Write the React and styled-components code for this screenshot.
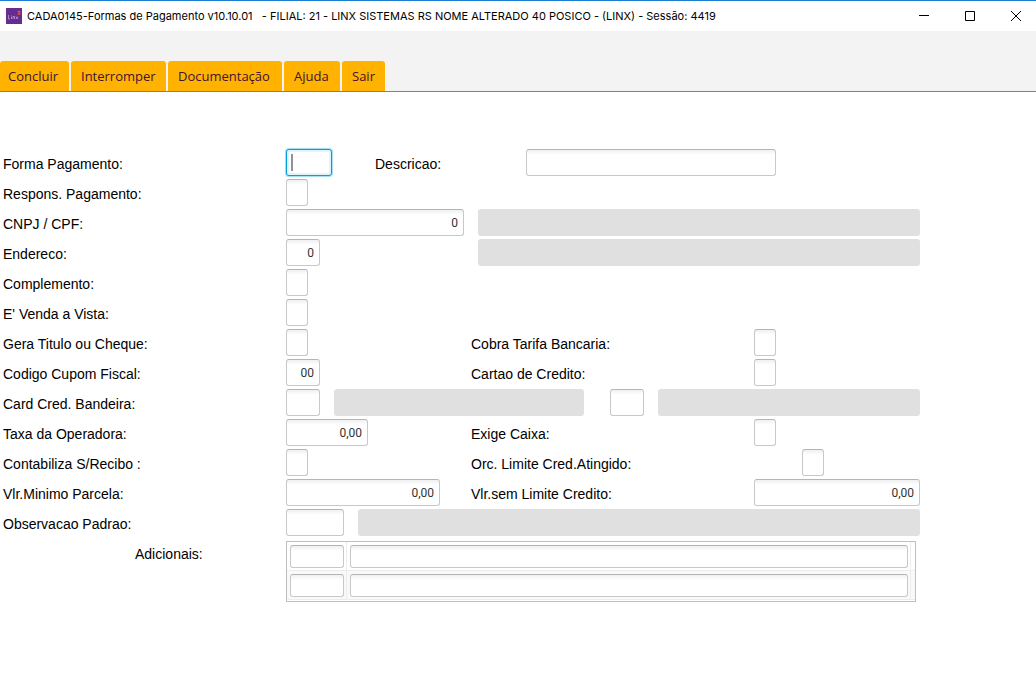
import React from "react";
import styled, { createGlobalStyle, css } from "styled-components";

const GlobalStyle = createGlobalStyle`
  *, *::before, *::after { box-sizing: border-box; }
  html, body { margin: 0; background: #fff; }
  body { font-family: "Liberation Sans", Arial, sans-serif; font-size: 14px; color: #000; }
  button, input { font: inherit; margin: 0; }
`;

const Window = styled.div`
  min-height: 100vh;
  border-top: 1px solid #1a7fd4;
`;

const TitleBar = styled.header`
  display: flex;
  align-items: center;
  height: 30px;
  padding-left: 6px;
  gap: 5px;
`;

const Title = styled.h1`
  flex: 1;
  min-width: 0;
  margin: 0;
  overflow: hidden;
  white-space: pre;
  font: 400 11px/20px "Segoe UI", Inter, sans-serif;
`;

const Logo = styled.svg`
  display: block;
  flex: none;
`;

const CaptionButtons = styled.div`
  display: flex;
  gap: 6px;
`;

const CaptionButton = styled.button`
  display: grid;
  place-items: center;
  width: 40px;
  height: 28px;
  padding: 0;
  border: 0;
  background: transparent;
`;

const Toolbar = styled.nav`
  display: flex;
  align-items: flex-end;
  gap: 2px;
  height: 61px;
  background: #f3f3f3;
  border-bottom: 1px solid #808080;
`;

const ToolButton = styled.button`
  width: ${(p) => p.$width}px;
  height: 30px;
  padding: 0 0 0 ${(p) => (p.$first ? 8 : 10)}px;
  border: 0;
  border-radius: 3px 3px 0 0;
  background: #ffb200;
  color: #411338;
  text-align: left;
  white-space: nowrap;
  font: 400 13px/30px "Segoe UI", "Open Sans", sans-serif;
`;

const Form = styled.form`
  display: grid;
  gap: 3px;
  max-width: 920px;
  padding: 57px 0 24px 3px;
`;

const Row = styled.div`
  display: grid;
  grid-template-columns: 283px ${(p) => p.$columns};
  align-items: start;
`;

const Label = styled.label`
  padding-top: 3px;
  padding-left: ${(p) => (p.$indent ? 132 : 0)}px;
  line-height: 24px;
  white-space: nowrap;
`;

const Field = styled.input`
  display: block;
  width: ${(p) => (p.$width ? `${p.$width}px` : "100%")};
  height: ${(p) => (p.$compact ? 23 : 27)}px;
  padding: 0 5px;
  border: 1px solid #c8c8c8;
  border-top-color: #b5b5b5;
  border-radius: 3px;
  outline: none;
  background: linear-gradient(#f0f0f0, #fff 5px);
  color: #333;
  font: 400 12px/20px "Segoe UI", Roboto, sans-serif;
  text-align: right;
  ${(p) =>
    p.$active &&
    css`
      border-color: #039ed3;
      background: #fff;
      box-shadow: 0 0 1px 1px #9fdcf2, inset 0 0 0 2px #e0f4fb;
      caret-color: transparent;
    `}
`;

const ReadOnly = styled.input`
  display: block;
  width: ${(p) => (p.$width ? `${p.$width}px` : "100%")};
  height: 27px;
  border: 0;
  border-radius: 3px;
  background: #e0e0e0;
  outline: none;
`;

const ActiveField = styled.div`
  position: relative;
`;

const Caret = styled.span`
  position: absolute;
  top: 5px;
  left: 5px;
  width: 2px;
  height: 17px;
  background: #989090;
`;

const Extras = styled.table`
  width: calc(100% - 4px);
  margin-top: 2px;
  padding-bottom: 1px;
  border: 1px solid #c0c0c0;
  border-collapse: separate;
  border-spacing: 0;
  table-layout: fixed;
`;

const ExtraRow = styled.tr`
  background: ${(p) => (p.$alt ? "#f9f9f9" : "#fff")};
`;

const ExtraCell = styled.td`
  width: ${(p) => (p.$width ? `${p.$width}px` : "auto")};
  height: 29px;
  padding: ${(p) => (p.$end ? "0" : "3px 2px 2px 3px")};
  border-right: ${(p) => (p.$end ? "0" : "1px solid #ededed")};
  border-bottom: 1px solid #ededed;
`;

const tools = [
  ["Concluir", 69],
  ["Interromper", 95],
  ["Documentação", 114],
  ["Ajuda", 56],
  ["Sair", 43],
];

function TextField({ id, label, ...field }) {
  return (
    <>
      <Label htmlFor={id}>{label}</Label>
      <Field id={id} {...field} />
    </>
  );
}

export default function App() {
  return (
    <Window>
      <GlobalStyle />
      <TitleBar>
        <Logo width="16" height="16" viewBox="0 0 16 16" aria-hidden="true">
          <rect width="16" height="16" fill="#662d91" />
          <path
            d="M2.5 7v4H4M5.5 8.5V11M5.5 7v.5M7 11V8.5h1.5V11M10 8.5l2 2.5M12 8.5L10 11"
            fill="none"
            stroke="#c9aedd"
            strokeWidth=".7"
          />
          <path d="M11.5 3.5l3 .3M13.5 3l-.8 3M12 6.5l2.5-.8" stroke="#f05a28" strokeWidth="1.1" />
        </Logo>
        <Title>
          {"CADA0145-Formas de Pagamento v10.10.01   - FILIAL: 21 - LINX SISTEMAS RS NOME ALTERADO 40 POSICO - (LINX) - Sessão: 4419"}
        </Title>
        <CaptionButtons>
          <CaptionButton type="button" aria-label="Minimizar">
            <svg width="10" height="10"><path d="M0 4.5h10" stroke="#000" /></svg>
          </CaptionButton>
          <CaptionButton type="button" aria-label="Maximizar">
            <svg width="10" height="10"><path d="M.5.5h9v9h-9z" fill="none" stroke="#000" /></svg>
          </CaptionButton>
          <CaptionButton type="button" aria-label="Fechar">
            <svg width="10" height="10"><path d="M0 0l10 10M10 0L0 10" stroke="#000" /></svg>
          </CaptionButton>
        </CaptionButtons>
      </TitleBar>

      <Toolbar>
        {tools.map(([name, width], i) => (
          <ToolButton key={name} type="button" $width={width} $first={i === 0}>
            {name}
          </ToolButton>
        ))}
      </Toolbar>

      <Form autoComplete="off">
        <Row $columns="89px 151px 250px">
          <Label htmlFor="forma">Forma Pagamento:</Label>
          <ActiveField>
            <Field id="forma" $width={46} $active />
            <Caret />
          </ActiveField>
          <TextField id="descricao" label="Descricao:" />
        </Row>
        <Row $columns="1fr">
          <TextField id="respons" label="Respons. Pagamento:" $width={22} />
        </Row>
        <Row $columns="192px 1fr">
          <TextField id="cnpj" label="CNPJ / CPF:" $width={178} defaultValue="0" />
          <ReadOnly readOnly aria-label="Nome" />
        </Row>
        <Row $columns="192px 1fr">
          <TextField id="endereco" label="Endereco:" $width={34} defaultValue="0" />
          <ReadOnly readOnly aria-label="Endereco" />
        </Row>
        <Row $columns="1fr">
          <TextField id="complemento" label="Complemento:" $width={22} />
        </Row>
        <Row $columns="1fr">
          <TextField id="vista" label="E' Venda a Vista:" $width={22} />
        </Row>
        <Row $columns="185px 283px 1fr">
          <TextField id="titulo" label="Gera Titulo ou Cheque:" $width={22} />
          <TextField id="tarifa" label="Cobra Tarifa Bancaria:" $width={22} />
        </Row>
        <Row $columns="185px 283px 1fr">
          <TextField id="cupom" label="Codigo Cupom Fiscal:" $width={34} defaultValue="00" />
          <TextField id="cartao" label="Cartao de Credito:" $width={22} />
        </Row>
        <Row $columns="48px 276px 48px 1fr">
          <TextField id="bandeira" label="Card Cred. Bandeira:" $width={34} />
          <ReadOnly readOnly aria-label="Bandeira" $width={250} />
          <Field aria-label="Operadora" $width={34} />
          <ReadOnly readOnly aria-label="Nome da operadora" />
        </Row>
        <Row $columns="185px 283px 1fr">
          <TextField id="taxa" label="Taxa da Operadora:" $width={82} defaultValue="0,00" />
          <TextField id="caixa" label="Exige Caixa:" $width={22} />
        </Row>
        <Row $columns="185px 331px 1fr">
          <TextField id="recibo" label="Contabiliza S/Recibo :" $width={22} />
          <TextField id="limite" label="Orc. Limite Cred.Atingido:" $width={22} />
        </Row>
        <Row $columns="185px 283px 1fr">
          <TextField id="parcela" label="Vlr.Minimo Parcela:" $width={154} defaultValue="0,00" />
          <TextField id="semlimite" label="Vlr.sem Limite Credito:" defaultValue="0,00" />
        </Row>
        <Row $columns="72px 1fr">
          <TextField id="observacao" label="Observacao Padrao:" $width={58} />
          <ReadOnly readOnly aria-label="Descricao da observacao" />
        </Row>
        <Row $columns="1fr">
          <Label htmlFor="adicional1" $indent>Adicionais:</Label>
          <Extras>
            <tbody>
              {[1, 2].map((n) => (
                <ExtraRow key={n} $alt={n === 2}>
                  <ExtraCell $width={60}>
                    <Field $compact id={`adicional${n}`} aria-label={`Codigo adicional ${n}`} />
                  </ExtraCell>
                  <ExtraCell>
                    <Field $compact aria-label={`Descricao adicional ${n}`} />
                  </ExtraCell>
                  <ExtraCell $width={4} $end />
                </ExtraRow>
              ))}
            </tbody>
          </Extras>
        </Row>
      </Form>
    </Window>
  );
}
